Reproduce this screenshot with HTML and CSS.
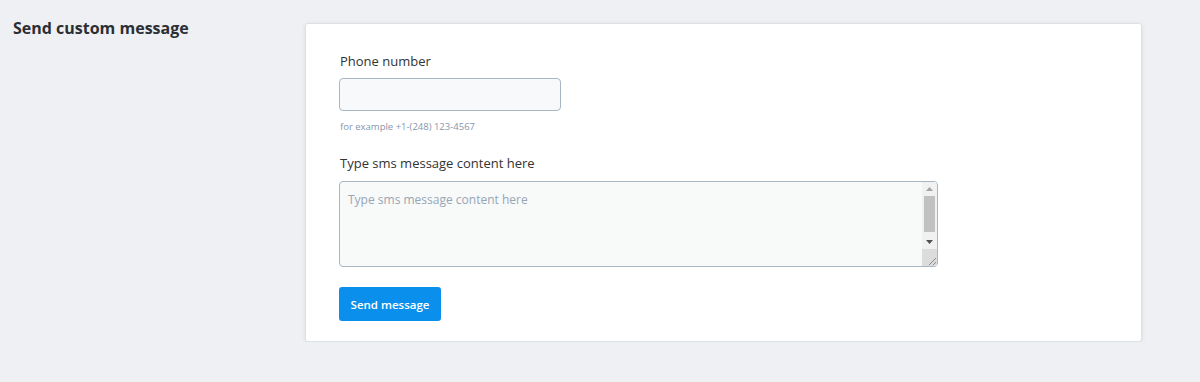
FILE: index.html
```html
<!DOCTYPE html>
<html>
<head>
<meta charset="utf-8">
<link rel="stylesheet" href="styles.css">
</head>
<body>
<div class="page">
  <div class="side">
    <h2 class="side-title">Send custom message</h2>
  </div>
  <div class="card">
    <div class="field">
      <label class="label">Phone number</label>
      <input class="input" type="text">
      <div class="hint">for example +1-(248) 123-4567</div>
    </div>
    <div class="field field-ta">
      <label class="label label-ta">Type sms message content here</label>
      <div class="ta-wrap">
        <textarea class="textarea" placeholder="Type sms message content here"></textarea>
        <div class="fake-scroll">
          <div class="sb-btn"><svg width="7" height="4" viewBox="0 0 7 4"><path d="M0 4L3.5 0L7 4Z" fill="#a3a3a3"/></svg></div>
          <div class="sb-track"><div class="sb-thumb"></div></div>
          <div class="sb-btn"><svg width="7" height="4" viewBox="0 0 7 4"><path d="M0 0L3.5 4L7 0Z" fill="#505050"/></svg></div>
          <div class="sb-corner"><svg width="10" height="10" viewBox="0 0 10 10"><path d="M9 2L2 9M9 6L6 9" stroke="#8a8a8a" stroke-width="1"/></svg></div>
        </div>
      </div>
    </div>
    <button class="btn">Send message</button>
  </div>
</div>
</body>
</html>
```
FILE: styles.css
```css
html, body {
  margin: 0;
  padding: 0;
  background: #eff0f3;
  font-family: "Open Sans", "Noto Sans", sans-serif;
  color: #333;
}
.page {
  display: flex;
  align-items: flex-start;
  padding: 16px 0 0 13px;
}
.side {
  width: 292px;
  flex-shrink: 0;
}
.side-title {
  margin: 0;
  font-size: 16px;
  font-weight: 700;
  color: #2b2f33;
  line-height: 24px;
}
.card {
  margin-top: 7px;
  width: 769px;
  background: #fff;
  border: 1px solid #dde1e6;
  border-radius: 3px;
  box-shadow: 0 1px 4px rgba(0,0,0,0.09);
  padding: 27px 33px 20px 33px;
}
.field {
  display: flex;
  flex-direction: column;
  align-items: flex-start;
  margin-bottom: 20px;
}
.label {
  font-size: 13px;
  color: #333;
  line-height: 20px;
  margin-bottom: 7px;
  padding-left: 1px;
}
.label-ta {
  margin-bottom: 8px;
}
.input {
  box-sizing: border-box;
  width: 222px;
  height: 33px;
  border: 1px solid #a9b6c4;
  border-radius: 4px;
  background: #f8f9fa;
  margin: 0;
  padding: 0 8px;
}
.hint {
  font-size: 9.5px;
  color: #8796ab;
  margin-top: 9px;
  line-height: 13px;
  padding-left: 1px;
}
.ta-wrap {
  position: relative;
  width: 599px;
  height: 86px;
}
.textarea {
  box-sizing: border-box;
  width: 599px;
  height: 86px;
  border: 1px solid #a9b6c4;
  border-radius: 4px;
  background: #f8f9f9;
  padding: 9px 8px;
  font-family: "Open Sans", "Noto Sans", sans-serif;
  font-size: 12px;
  resize: none;
  margin: 0;
  display: block;
}
.textarea::placeholder {
  color: #97a5b5;
}
.fake-scroll {
  position: absolute;
  right: 1px;
  top: 1px;
  bottom: 1px;
  width: 15px;
  background: #f1f1f1;
  display: flex;
  flex-direction: column;
  border-top-right-radius: 3px;
  border-bottom-right-radius: 3px;
}
.sb-btn {
  height: 14px;
  display: flex;
  align-items: center;
  justify-content: center;
}
.sb-track {
  flex: 1;
  padding: 0 2px;
}
.sb-thumb {
  height: 36px;
  background: #c1c1c1;
}
.sb-corner {
  height: 17px;
  background: #dcdcdc;
  display: flex;
  align-items: flex-end;
  justify-content: flex-end;
}
.btn {
  display: block;
  width: 102px;
  height: 34px;
  background: #0a8fec;
  color: #fff;
  border: 0;
  border-radius: 3px;
  font-family: "Open Sans", "Noto Sans", sans-serif;
  font-size: 11.5px;
  font-weight: 600;
  padding: 0;
}
```
